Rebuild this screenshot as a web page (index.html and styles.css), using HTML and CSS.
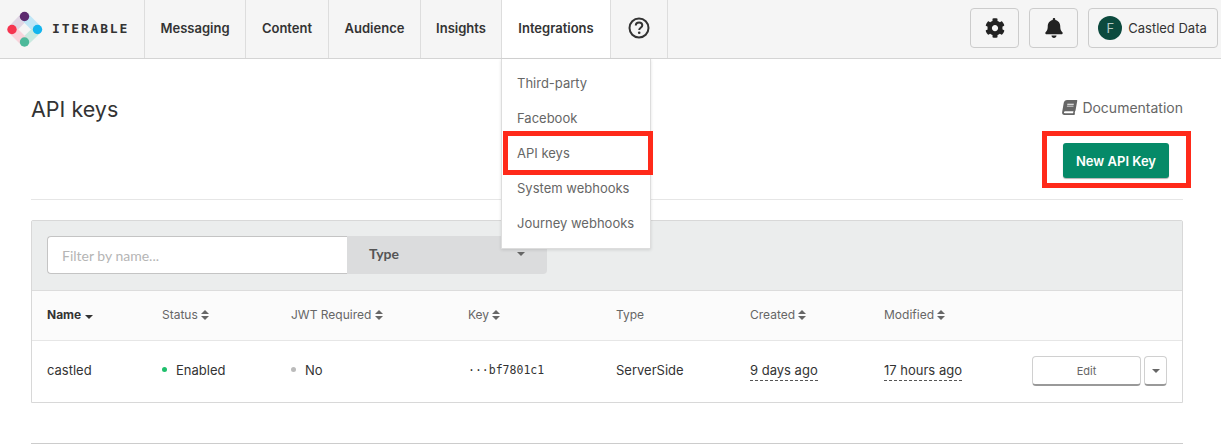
FILE: index.html
```html
<!DOCTYPE html>
<html lang="en">
<head>
  <meta charset="UTF-8">
  <title>API keys</title>
  <link rel="stylesheet" href="styles.css">
</head>
<body>
  <header class="topbar">
    <div class="brand">
      <svg class="brand-mark" width="50" height="56" viewBox="0 0 50 56">
        <line x1="12" y1="28.500" x2="24.500" y2="15.500" stroke="#e0d6e4" stroke-width="9"/>
        <line x1="24.500" y1="15.500" x2="37.500" y2="28.500" stroke="#bfe6f6" stroke-width="9"/>
        <line x1="37.500" y1="28.500" x2="24.500" y2="41" stroke="#c8e9df" stroke-width="9"/>
        <line x1="24.500" y1="41" x2="12" y2="28.500" stroke="#f9d3db" stroke-width="9"/>
        <circle cx="24.500" cy="15.500" r="4.700" fill="#5c2a6e"/>
        <circle cx="37.500" cy="28.500" r="4.700" fill="#14b5ee"/>
        <circle cx="24.500" cy="41" r="4.700" fill="#4cb99a"/>
        <circle cx="12" cy="28.500" r="4.700" fill="#f5344f"/>
      </svg>
      <span class="brand-name">ITERABLE</span>
    </div>
    <nav class="nav">
      <a class="nav-item nav-messaging">Messaging</a>
      <a class="nav-item nav-content">Content</a>
      <a class="nav-item nav-audience">Audience</a>
      <a class="nav-item nav-insights">Insights</a>
      <div class="nav-item nav-integrations is-open">
        Integrations
        <ul class="menu">
          <li>Third-party</li>
          <li>Facebook</li>
          <li class="menu-marked">API keys</li>
          <li>System webhooks</li>
          <li>Journey webhooks</li>
        </ul>
      </div>
      <a class="nav-item nav-help">
        <svg width="22" height="22" viewBox="0 0 22 22">
          <circle cx="11" cy="11" r="9.500" fill="none" stroke="#333" stroke-width="2"/>
          <path d="M7.800 8.600c0-2 1.500-3.200 3.300-3.200s3.200 1.100 3.200 2.900c0 2.500-3.100 2.400-3.100 4.700" fill="none" stroke="#333" stroke-width="2"/>
          <circle cx="11.200" cy="15.800" r="1.300" fill="#333"/>
        </svg>
      </a>
    </nav>
    <div class="top-actions">
      <button class="top-btn top-btn-icon">
        <svg width="20" height="20" viewBox="0 0 512 512"><path fill="#222" d="M487.4 315.7l-42.6-24.6c4.3-23.2 4.3-47 0-70.2l42.6-24.6c4.9-2.8 7.1-8.6 5.5-14-11.100-35.600-30-67.800-54.700-94.600-3.800-4.100-10-5.100-14.800-2.300L380.800 110c-17.900-15.400-38.500-27.300-60.800-35.100V25.800c0-5.600-3.900-10.500-9.400-11.700-36.700-8.200-74.300-7.800-109.200 0-5.500 1.200-9.400 6.100-9.400 11.700V75c-22.200 7.900-42.800 19.800-60.800 35.100L88.700 85.500c-4.900-2.800-11-1.900-14.800 2.300-24.700 26.700-43.600 58.900-54.700 94.600-1.700 5.400.6 11.200 5.500 14L67.300 221c-4.300 23.200-4.300 47 0 70.200l-42.600 24.600c-4.900 2.800-7.100 8.600-5.500 14 11.100 35.600 30 67.800 54.700 94.600 3.800 4.100 10 5.100 14.800 2.300l42.600-24.600c17.900 15.400 38.500 27.300 60.800 35.100v49.200c0 5.600 3.900 10.500 9.400 11.700 36.700 8.200 74.300 7.800 109.200 0 5.500-1.200 9.400-6.100 9.400-11.700v-49.200c22.200-7.900 42.800-19.800 60.800-35.100l42.600 24.600c4.900 2.800 11 1.900 14.800-2.300 24.700-26.700 43.600-58.900 54.700-94.600 1.500-5.500-.7-11.300-5.600-14.100zM256 336c-44.100 0-80-35.900-80-80s35.900-80 80-80 80 35.900 80 80-35.900 80-80 80z"/></svg>
      </button>
      <button class="top-btn top-btn-icon">
        <svg width="18" height="20" viewBox="0 0 448 512"><path fill="#222" d="M224 512c35.320 0 63.970-28.650 63.970-64H160.030c0 35.350 28.650 64 63.970 64zm215.390-149.710c-19.320-20.760-55.470-51.990-55.470-154.290 0-77.700-54.480-139.900-127.940-155.160V32c0-17.670-14.320-32-31.980-32s-31.980 14.330-31.980 32v20.840C118.560 68.100 64.080 130.300 64.080 208c0 102.300-36.150 133.530-55.470 154.290-6 6.450-8.660 14.160-8.610 21.710.11 16.400 12.980 32 32.100 32h383.800c19.120 0 32-15.600 32.100-32 .05-7.550-2.610-15.270-8.610-21.710z"/></svg>
      </button>
      <button class="top-btn top-btn-user">
        <span class="avatar">F</span>
        Castled Data
      </button>
    </div>
  </header>

  <main class="page">
    <section class="page-head">
      <h1 class="page-title">API keys</h1>
      <div class="page-links">
        <a class="doc-link">
          <svg class="doc-icon" width="15" height="15" viewBox="0 0 448 512"><path fill="#666" d="M448 360V24c0-13.300-10.700-24-24-24H96C43 0 0 43 0 96v320c0 53 43 96 96 96h328c13.300 0 24-10.700 24-24v-16c0-7.500-3.500-14.300-8.900-18.700-4.200-15.400-4.200-59.300 0-74.700 5.400-4.300 8.900-11.100 8.900-18.600zM128 134c0-3.300 2.700-6 6-6h212c3.300 0 6 2.700 6 6v20c0 3.300-2.700 6-6 6H134c-3.300 0-6-2.700-6-6v-20zm0 64c0-3.300 2.700-6 6-6h212c3.300 0 6 2.700 6 6v20c0 3.300-2.700 6-6 6H134c-3.300 0-6-2.700-6-6v-20zm253.400 250H96c-17.700 0-32-14.300-32-32 0-17.600 14.400-32 32-32h285.400c-1.900 17.100-1.900 46.900 0 64z"/></svg>
          Documentation
        </a>
        <div class="new-key-wrap">
          <button class="btn-new">New API Key</button>
        </div>
      </div>
    </section>

    <section class="panel">
      <div class="filters">
        <input class="filter-input" type="text" placeholder="Filter by name...">
        <div class="filter-type">
          <span>Type</span>
          <i class="caret caret-type"></i>
        </div>
      </div>
      <div class="row row-head">
        <div class="cell-name">Name <i class="caret caret-dark"></i></div>
        <div>Status <i class="sort"></i></div>
        <div>JWT Required <i class="sort"></i></div>
        <div>Key <i class="sort"></i></div>
        <div>Type</div>
        <div>Created <i class="sort"></i></div>
        <div>Modified <i class="sort"></i></div>
        <div></div>
      </div>
      <div class="row row-body">
        <div>castled</div>
        <div class="status"><i class="dot dot-on"></i>Enabled</div>
        <div class="status"><i class="dot dot-off"></i>No</div>
        <div class="mono">···bf7801c1</div>
        <div>ServerSide</div>
        <div><span class="dashed">9 days ago</span></div>
        <div><span class="dashed">17 hours ago</span></div>
        <div class="row-actions">
          <button class="btn-edit">Edit</button>
          <button class="btn-more"><i class="caret"></i></button>
        </div>
      </div>
    </section>

    <hr class="page-end">
  </main>
</body>
</html>
```

FILE: styles.css
```css
*, *::before, *::after {
  box-sizing: border-box;
}
html, body {
  margin: 0;
  height: 446px;
  overflow: hidden;
}
body {
  background-color: #fff;
  color: #333;
  font-family: "Inter", "Liberation Sans", sans-serif;
  font-size: 13px;
}
button {
  font-family: inherit;
  cursor: pointer;
}

/* top bar */
.topbar {
  display: flex;
  height: 59px;
  background-color: #f5f5f5;
  border-bottom: 1px solid #d4d4d4;
}
.brand {
  display: flex;
  align-items: center;
  width: 145px;
  flex: none;
  border-right: 1px solid #ddd;
}
.brand-mark {
  flex: none;
  margin-top: -1px;
}
.brand-name {
  margin-left: 2px;
  padding-bottom: 1px;
  color: #333;
  font-family: "DejaVu Sans Mono", monospace;
  font-size: 13px;
  font-weight: 700;
  letter-spacing: 1.8px;
}
.nav {
  display: flex;
  flex: 1;
}
.nav-item {
  position: relative;
  display: flex;
  align-items: center;
  justify-content: center;
  padding-bottom: 2px;
  border-right: 1px solid #ddd;
  color: #333;
  font-size: 13px;
  font-weight: 600;
}
.nav-messaging { width: 101px; }
.nav-content { width: 83px; }
.nav-audience { width: 92px; }
.nav-insights { width: 81px; }
.nav-integrations { width: 109px; }
.nav-help { width: 57px; }
.is-open {
  background-color: #fff;
  z-index: 2;
}

/* dropdown */
.menu {
  position: absolute;
  top: 59px;
  left: -1px;
  width: 150px;
  margin: 0;
  padding: 7px 0 7px;
  list-style: none;
  background-color: #fff;
  border: 1px solid #ddd;
  border-top: none;
  box-shadow: 0 1px 3px rgba(0,0,0,0.12);
  color: #666;
  font-size: 13px;
  font-weight: 400;
}
.menu li {
  position: relative;
  height: 35px;
  line-height: 35px;
  padding-left: 15px;
  white-space: nowrap;
}
.menu-marked::after {
  content: "";
  position: absolute;
  top: -5px;
  left: 1px;
  width: 150px;
  height: 44px;
  border: 5px solid #ff2a1a;
}

.top-actions {
  display: flex;
  align-items: center;
  gap: 10px;
  padding: 0 3px 2px 0;
}
.top-btn {
  display: flex;
  align-items: center;
  justify-content: center;
  height: 40px;
  background-color: #f5f5f5;
  border: 1px solid #ccc;
  border-radius: 4px;
  color: #333;
  font-size: 13px;
}
.top-btn-icon {
  width: 49px;
}
.top-btn-user {
  width: 130px;
  gap: 6px;
  padding: 0 1px 0 0;
}
.avatar {
  display: flex;
  align-items: center;
  justify-content: center;
  width: 24px;
  height: 24px;
  border-radius: 50%;
  background-color: #0c4a3e;
  color: #b5c9c4;
  font-size: 13px;
}

/* page */
.page {
  padding: 0 38px 0 31px;
}
.page-head {
  display: flex;
  justify-content: space-between;
  height: 141px;
  border-bottom: 1px solid #e6e6e6;
}
.page-title {
  margin: 35px 0 0;
  color: #333;
  font-size: 21.500px;
  font-weight: 400;
  line-height: 30px;
}
.page-links {
  display: flex;
  flex-direction: column;
  align-items: flex-end;
}
.doc-link {
  display: flex;
  align-items: center;
  gap: 5px;
  height: 20px;
  margin-top: 38px;
  color: #666;
  font-size: 14px;
  font-weight: 400;
}
.doc-icon {
  transform: skewX(-10deg);
}
.new-key-wrap {
  margin: 14px -8px 0 0;
  padding: 7px 17px 5px 16px;
  border: 5px solid #ff2a1a;
}
.btn-new {
  display: block;
  width: 106px;
  height: 35px;
  padding: 0;
  background-color: #058a68;
  border: none;
  border-radius: 3px;
  box-shadow: 0 1px 1px rgba(0,0,0,0.3);
  color: #fff;
  font-size: 13px;
  font-weight: 600;
}

/* table panel */
.panel {
  margin-top: 20px;
  border: 1px solid #d8d8d8;
  border-radius: 2px 2px 0 0;
}
.filters {
  display: flex;
  height: 70px;
  padding: 15px;
  background-color: #ebeded;
  border-bottom: 1px solid #dcdcdc;
}
.filter-input {
  width: 300px;
  height: 38px;
  padding: 0 14px;
  background-color: #fff;
  border: 1px solid #c4c4c4;
  border-right: none;
  border-radius: 4px 0 0 4px;
  font-family: "Lato", sans-serif;
  font-size: 14px;
  outline: none;
}
.filter-input::placeholder {
  color: #b5b5b5;
}
.filter-type {
  display: flex;
  align-items: center;
  justify-content: space-between;
  width: 200px;
  height: 38px;
  padding: 0 22px 3px 22px;
  background-color: #dbdcdd;
  border-radius: 0 4px 4px 0;
  color: #555;
  font-family: "Lato", sans-serif;
  font-size: 14px;
  font-weight: 700;
}
.row {
  display: grid;
  grid-template-columns: 115px 129px 177px 148px 134px 134px 148px auto;
  align-items: center;
  padding-left: 15px;
}
.row-head {
  height: 50px;
  padding-bottom: 2px;
  background-color: #fbfbfb;
  border-bottom: 1px solid #e6e6e6;
  color: #666;
  font-size: 12px;
}
.cell-name {
  color: #333;
  font-weight: 700;
}
.row-body {
  height: 61px;
  padding-bottom: 4px;
  color: #333;
}
.status {
  display: flex;
  align-items: center;
}
.dot {
  width: 5px;
  height: 5px;
  margin-right: 9px;
  border-radius: 50%;
}
.dot-on { background-color: #1fbf6c; }
.dot-off { background-color: #bbb; }
.mono {
  font-family: "DejaVu Sans Mono", monospace;
  font-size: 11.500px;
}
.dashed {
  padding-bottom: 2px;
  border-bottom: 1px dashed #555;
}
.row-actions {
  display: flex;
  gap: 3px;
  margin-top: 3px;
}
.btn-edit {
  width: 109px;
  height: 30px;
  padding: 0;
  background-color: #fff;
  border: 1px solid #d0d0d0;
  border-bottom: 2px solid #999;
  border-radius: 4px;
  color: #666;
  font-size: 11px;
}
.btn-more {
  display: flex;
  align-items: center;
  justify-content: center;
  width: 23px;
  height: 30px;
  padding: 0;
  background-color: #fff;
  border: 1px solid #d0d0d0;
  border-bottom: 2px solid #999;
  border-radius: 4px;
}
.caret {
  display: inline-block;
  width: 0;
  height: 0;
  border-left: 4px solid transparent;
  border-right: 4px solid transparent;
  border-top: 4px solid #666;
}
.caret-dark {
  vertical-align: 0;
  margin-left: 1px;
  border-top-color: #333;
}
.caret-type {
  position: relative;
  top: 0;
}
.sort {
  position: relative;
  display: inline-block;
  width: 8px;
  height: 10px;
  vertical-align: -1px;
}
.sort::before,
.sort::after {
  content: "";
  position: absolute;
  left: 0;
  border-left: 4px solid transparent;
  border-right: 4px solid transparent;
}
.sort::before {
  top: 0;
  border-bottom: 4px solid #666;
}
.sort::after {
  bottom: 0;
  border-top: 4px solid #666;
}
.page-end {
  margin: 40px 0 0;
  border: none;
  border-top: 1px solid #ccc;
}
```
